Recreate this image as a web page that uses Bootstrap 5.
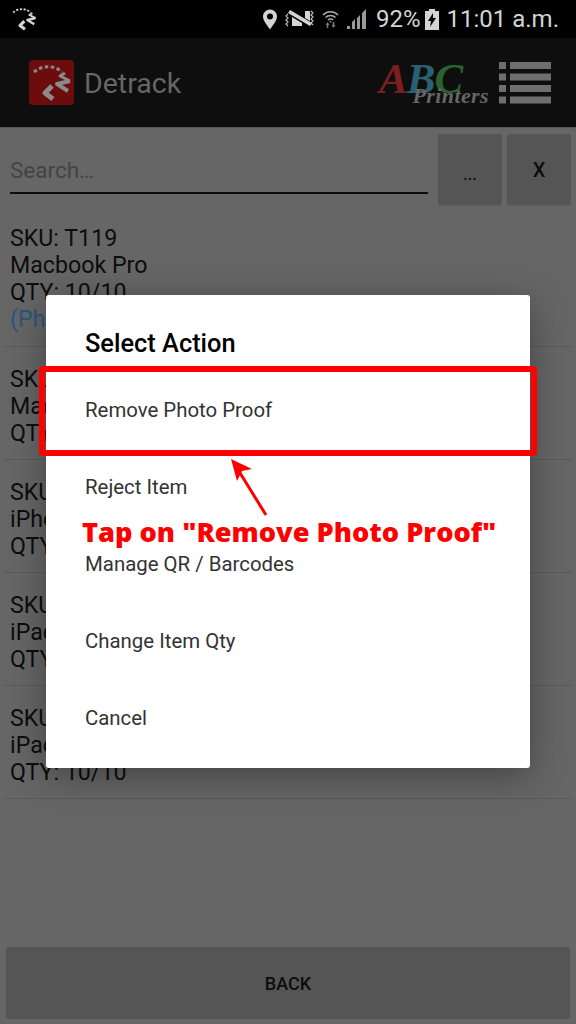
<!DOCTYPE html>
<html lang="en">
<head>
  <meta charset="UTF-8">
  <title>Detrack</title>
  <meta name="viewport" content="width=device-width, initial-scale=1">
  <link href="https://cdn.jsdelivr.net/npm/bootstrap@5.3.3/dist/css/bootstrap.min.css" rel="stylesheet">
  <style>
    html, body { height: 100%; }
    body { font-family: Roboto, "Liberation Sans", sans-serif; background: #666; color: #0d0d0d; overflow: hidden; }
    .phone { position: relative; width: 576px; height: 1024px; display: flex; flex-direction: column; background: #666; overflow: hidden; }
    /* status bar */
    .status-bar { height: 38px; background: #000; color: #d4d4d4; font-size: 24px; padding: 0 17px 0 10px; }
    .status-time { margin-left: 8px; }
    .status-icons { gap: 8px; margin-right: 9px; }
    /* app bar */
    .app-bar { height: 90px; background: #0e0e0e; border-bottom: 1px solid #555; padding: 0 25px 0 29px; }
    .app-title { color: #666; font-size: 28.5px; margin-left: 10px; padding-top: 4px; }
    .abc-logo { position: relative; width: 110px; height: 50px; margin-right: 10px; font-family: "Liberation Serif", serif; font-style: italic; font-weight: 700; }
    .abc-letters { position: absolute; left: 0; top: -2px; font-size: 43px; line-height: 46px; letter-spacing: -1px; white-space: nowrap; }
    .abc-a { color: #7c1d1f; } .abc-b { color: #2b6070; } .abc-c { color: #2a6231; }
    .abc-sub { position: absolute; right: 0; bottom: 0; color: #666; font-size: 22px; line-height: 24px; letter-spacing: .4px; }
    /* search */
    .search-row { padding: 6px 5px 0 10px; gap: 5px; }
    .search-field { flex: 1; height: 60px; border-bottom: 2px solid #0d0d0d; color: #444; font-size: 22.5px; padding-top: 23px; margin-right: 5px; line-height: 26px; }
    .square-btn { width: 64px; height: 71px; background: #555; border: 0; border-radius: 3px; color: #0d0d0d; font-size: 20px; font-weight: 500; padding: 0; box-shadow: 0 1px 1px #5c5c5c; }
    .dots-label { font-size: 16px; position: relative; top: 3px; }
    /* list */
    .sku-item { margin: 0 3px; padding: 19px 7px 12px; border-bottom: 1px solid #5a5a5a; font-size: 23.2px; line-height: 27px; white-space: nowrap; }
    .sku-first { padding-top: 20px; padding-bottom: 13px; }
    .proof-link { color: #2b5580; }
    .back-btn { height: 72px; margin: auto 6px 5px; background: #555; border: 0; border-radius: 3px; color: #0d0d0d; font-size: 18px; font-weight: 500; }
    /* dialog */
    .action-dialog { position: absolute; left: 46px; top: 295px; width: 484px; height: 473px; background: #fff; border-radius: 3px; box-shadow: 0 8px 36px rgba(0,0,0,.35); padding: 31px 39px 0; }
    .action-title { font-size: 25.4px; font-weight: 500; color: #000; line-height: 34px; margin-bottom: 36px; }
    .action-item { font-size: 20.4px; color: #333; height: 77px; line-height: 28px; }
    /* annotation on top of the screenshot */
    .callout-box { position: absolute; left: 39px; top: 366px; width: 498px; height: 90px; border: 6px solid #f00; border-radius: 4px; }
    .callout-arrow { position: absolute; left: 224px; top: 454px; }
    .callout-text { position: absolute; left: 82px; top: 513px; color: #f00; font-family: "Open Sans", sans-serif; font-weight: 800; font-size: 27.2px; line-height: 38px; white-space: nowrap; }
  </style>
</head>
<body>
  <div class="phone">
    <!-- status bar -->
    <div class="status-bar d-flex align-items-center">
      <svg width="28" height="28" viewBox="0 0 45 45" fill="none" stroke="#d4d4d4" stroke-linejoin="round">
        <path stroke-width="3" stroke-dasharray="3.500 2.500" d="M5 12C12 6 24 4 33 12"/>
        <path stroke-width="3" d="M36 13l-5 3 10 5"/>
        <path stroke-width="4" d="M41 21l-13 3 11 7"/>
        <path stroke-width="5" d="M23 26l-7 7 8 6"/>
      </svg>
      <div class="ms-auto d-flex align-items-center">
        <div class="status-icons d-flex align-items-center">
          <!-- location pin -->
          <svg width="14" height="21" viewBox="0 0 14 20"><path fill="#d4d4d4" fill-rule="evenodd" d="M7 0a7 7 0 0 1 7 7c0 4.500-4.500 9-7 13C4.500 16 0 11.500 0 7a7 7 0 0 1 7-7zm0 4a3 3 0 1 0 0 6 3 3 0 0 0 0-6z"/></svg>
          <!-- vibrate / mute -->
          <svg width="29" height="18" viewBox="0 0 29 18" fill="#d4d4d4">
            <path d="M5 0l22 13-2 3L3 3zM20 1h5v10l-5-3zM7 7l10 6v3H7z"/>
            <path fill="none" stroke="#bbb" stroke-width="1.200" d="M3 4L1 6l2 2-2 2 2 2-2 2 2 2M26 1l2 2-2 2 2 2-2 2 2 2-2 2 2 2"/>
          </svg>
          <!-- wifi -->
          <svg width="17" height="18" viewBox="0 0 17 18" fill="none" stroke="#a8a8a8" stroke-width="1.500">
            <path d="M1 5a10.500 10.500 0 0 1 15 0M3.500 7.500a7 7 0 0 1 10 0M6 10a3.500 3.500 0 0 1 5 0"/>
            <path fill="#777" stroke="none" d="M7.500 11h2v1.500h-2zM5.500 12l2 3H6.300v3H4.700v-3H3.500zM11.500 18l-2-3h1.200v-3h1.600v3h1.200z"/>
          </svg>
          <!-- signal -->
          <svg width="20" height="20" viewBox="0 0 20 20" fill="#999">
            <path d="M0 20v-3h3v3zM5 20v-7l3-3v10zM10 20V9l3-3v14zM15 20V4l4-4v20z"/>
          </svg>
        </div>
        <span>92%</span>
        <!-- battery -->
        <svg width="14" height="21" viewBox="0 0 14 21" class="ms-1"><path fill="#d4d4d4" d="M4 0h6v2h4v19H0V2h4z"/><path fill="#000" d="M8 4L3 12h3l-1 6 6-9H8z"/></svg>
        <span class="status-time">11:01 a.m.</span>
      </div>
    </div>

    <!-- app bar -->
    <div class="app-bar d-flex align-items-center">
      <svg width="45" height="45" viewBox="0 0 45 45" fill="none" stroke="#8a8a8a" stroke-linejoin="round">
        <rect width="45" height="45" rx="4" fill="#6d0c0c" stroke="none"/>
        <path stroke-width="3" stroke-dasharray="3.500 2.500" d="M5 12C12 6 24 4 33 12"/>
        <path stroke-width="3" d="M36 13l-5 3 10 5"/>
        <path stroke-width="4" d="M41 21l-13 3 11 7"/>
        <path stroke-width="5" d="M23 26l-7 7 8 6"/>
      </svg>
      <span class="app-title">Detrack</span>
      <div class="abc-logo ms-auto">
        <span class="abc-letters"><span class="abc-a">A</span><span class="abc-b">B</span><span class="abc-c">C</span></span>
        <span class="abc-sub">Printers</span>
      </div>
      <svg width="52" height="42" viewBox="0 0 52 42" fill="#6e6e6e">
        <path d="M0 0h7v7H0zM11 0h41v7H11zM0 11.500h7v7H0zM11 11.500h41v7H11zM0 23h7v7H0zM11 23h41v7H11zM0 34.500h7v7H0zM11 34.500h41v7H11z"/>
      </svg>
    </div>

    <!-- search -->
    <div class="search-row d-flex">
      <div class="search-field">Search…</div>
      <button class="square-btn"><span class="dots-label">...</span></button>
      <button class="square-btn">X</button>
    </div>

    <!-- items -->
    <div class="sku-item sku-first">SKU: T119<br>Macbook Pro<br>QTY: 10/10<br><span class="proof-link">(Photo Proof)</span></div>
    <div class="sku-item">SKU: T120<br>Macbook Air<br>QTY: 10/10</div>
    <div class="sku-item">SKU: T121<br>iPhone 7<br>QTY: 10/10</div>
    <div class="sku-item">SKU: T122<br>iPad Pro<br>QTY: 10/10</div>
    <div class="sku-item">SKU: T123<br>iPad Mini<br>QTY: 10/10</div>

    <button class="back-btn">BACK</button>

    <!-- dialog -->
    <div class="action-dialog">
      <div class="action-title">Select Action</div>
      <div class="action-item">Remove Photo Proof</div>
      <div class="action-item">Reject Item</div>
      <div class="action-item">Manage QR / Barcodes</div>
      <div class="action-item">Change Item Qty</div>
      <div class="action-item">Cancel</div>
    </div>

    <!-- annotation -->
    <div class="callout-box"></div>
    <svg class="callout-arrow" width="50" height="65" viewBox="0 0 50 65">
      <path stroke="#f00" stroke-width="3" d="M42 61L13 14"/>
      <path fill="#f00" d="M7 5l21 10-10 2-5 10z"/>
    </svg>
    <div class="callout-text">Tap on "Remove Photo Proof"</div>
  </div>
  <script src="https://cdn.jsdelivr.net/npm/bootstrap@5.3.3/dist/js/bootstrap.bundle.min.js"></script>
</body>
</html>
